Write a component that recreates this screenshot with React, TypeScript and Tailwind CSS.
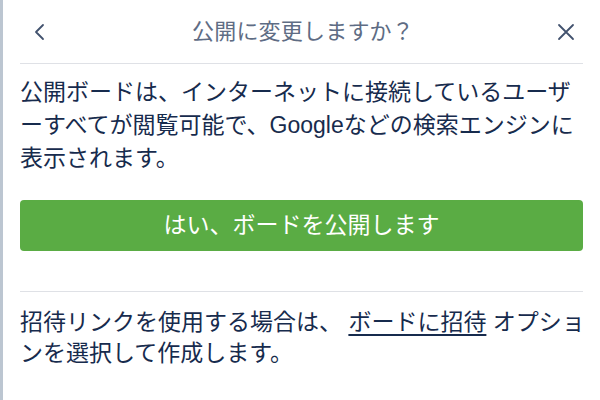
import React from 'react';

const font = { fontFamily: '"Liberation Sans", "Noto Sans CJK JP", sans-serif' };

export default function App() {
  return (
    <div
      className="w-[600px] h-[400px] bg-white border-l-[3px] border-[#bcc6d1] overflow-hidden"
      style={font}
    >
      {/* Header */}
      <div className="h-[63px] flex items-center justify-between pl-[27px] pr-[24px]">
        <button className="w-[20px] h-[20px] flex items-center justify-center text-[#42526e]">
          <svg width="14" height="20" viewBox="0 0 14 20" fill="none">
            <path d="M10 3 L3 10 L10 17" stroke="currentColor" strokeWidth="1.8" strokeLinecap="round" strokeLinejoin="round" />
          </svg>
        </button>
        <h2 className="text-[22px] text-[#5e6c84] tracking-[0.2px]">公開に変更しますか？</h2>
        <button className="w-[20px] h-[20px] flex items-center justify-center text-[#42526e]">
          <svg width="18" height="18" viewBox="0 0 18 18" fill="none">
            <path d="M2 2 L16 16 M16 2 L2 16" stroke="currentColor" strokeWidth="1.8" strokeLinecap="round" />
          </svg>
        </button>
      </div>

      <div className="px-[17px]">
        <div className="h-px bg-[#dfe1e6]" />

        {/* Description */}
        <p className="mt-[12px] text-[23px] leading-[33px] text-[#172b4d] whitespace-nowrap">
          公開ボードは、インターネットに接続しているユーザ
          <br />
          ーすべてが閲覧可能で、Googleなどの検索エンジンに
          <br />
          表示されます。
        </p>

        {/* Confirm button */}
        <button className="mt-[25px] w-full h-[51px] rounded-[4px] bg-[#5aac44] text-white text-[23px] flex items-center justify-center">
          はい、ボードを公開します
        </button>

        <div className="mt-[40px] h-px bg-[#dfe1e6]" />

        {/* Invite note */}
        <p className="mt-[15px] text-[23px] leading-[31px] text-[#172b4d] whitespace-nowrap">
          招待リンクを使用する場合は、 <a className="underline underline-offset-[4px]">ボードに招待</a> オプショ
          <br />
          ンを選択して作成します。
        </p>
      </div>
    </div>
  );
}
